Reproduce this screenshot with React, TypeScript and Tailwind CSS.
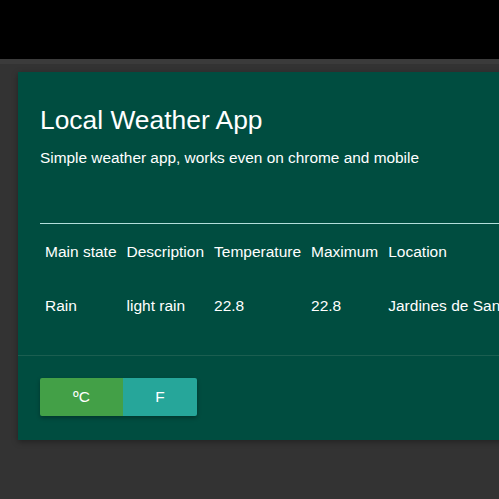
// Local Weather App card

const rows = [
  { main: 'Rain', description: 'light rain', temp: '22.8', max: '22.8', location: 'Jardines de San Rafael' },
];

export default function App() {
  return (
    <div
      className="min-h-[499px] w-full overflow-hidden bg-[#333333] text-white"
      style={{ fontFamily: '"Liberation Sans", Arial, sans-serif' }}
    >
      <div className="h-[59px] bg-black" />
      <div className="h-[5px] bg-[#3b3b3b]" />
      <div className="pl-[18px] pt-[8px]">
        <div className="w-[600px] bg-[#004d40] shadow-[0_2px_6px_rgba(0,0,0,0.35)]">
          <div className="px-[22px] pt-[32px] pb-[22px]">
            <h1 className="text-[26.4px] leading-[32px] font-normal">Local Weather App</h1>
            <p className="mt-[12px] text-[15.4px] leading-[20px]">
              Simple weather app, works even on chrome and mobile
            </p>
            <hr className="mt-[55px] border-0 border-t border-[#b2dfdb]" />
            <table className="border-collapse text-left text-[15.5px] whitespace-nowrap">
              <thead>
                <tr className="h-[55px]">
                  <th className="px-[5px] font-normal">Main state</th>
                  <th className="px-[5px] font-normal">Description</th>
                  <th className="px-[5px] font-normal">Temperature</th>
                  <th className="px-[5px] font-normal">Maximum</th>
                  <th className="px-[5px] font-normal">Location</th>
                </tr>
              </thead>
              <tbody>
                {rows.map((r) => (
                  <tr key={r.location} className="h-[54px]">
                    <td className="px-[5px]">{r.main}</td>
                    <td className="px-[5px]">{r.description}</td>
                    <td className="px-[5px]">{r.temp}</td>
                    <td className="px-[5px]">{r.max}</td>
                    <td className="px-[5px]">{r.location}</td>
                  </tr>
                ))}
              </tbody>
            </table>
          </div>
          <div className="border-t border-[#1b5e50] px-[22px] pt-[22px] pb-[24px]">
            <div className="inline-flex overflow-hidden rounded-[2px] shadow-[0_2px_4px_rgba(0,0,0,0.3)]">
              <button className="h-[38px] w-[83px] bg-[#43a047] text-[15.5px] text-white">ºC</button>
              <button className="h-[38px] w-[74px] bg-[#26a69a] text-[15.5px] text-white">F</button>
            </div>
          </div>
        </div>
      </div>
    </div>
  );
}
